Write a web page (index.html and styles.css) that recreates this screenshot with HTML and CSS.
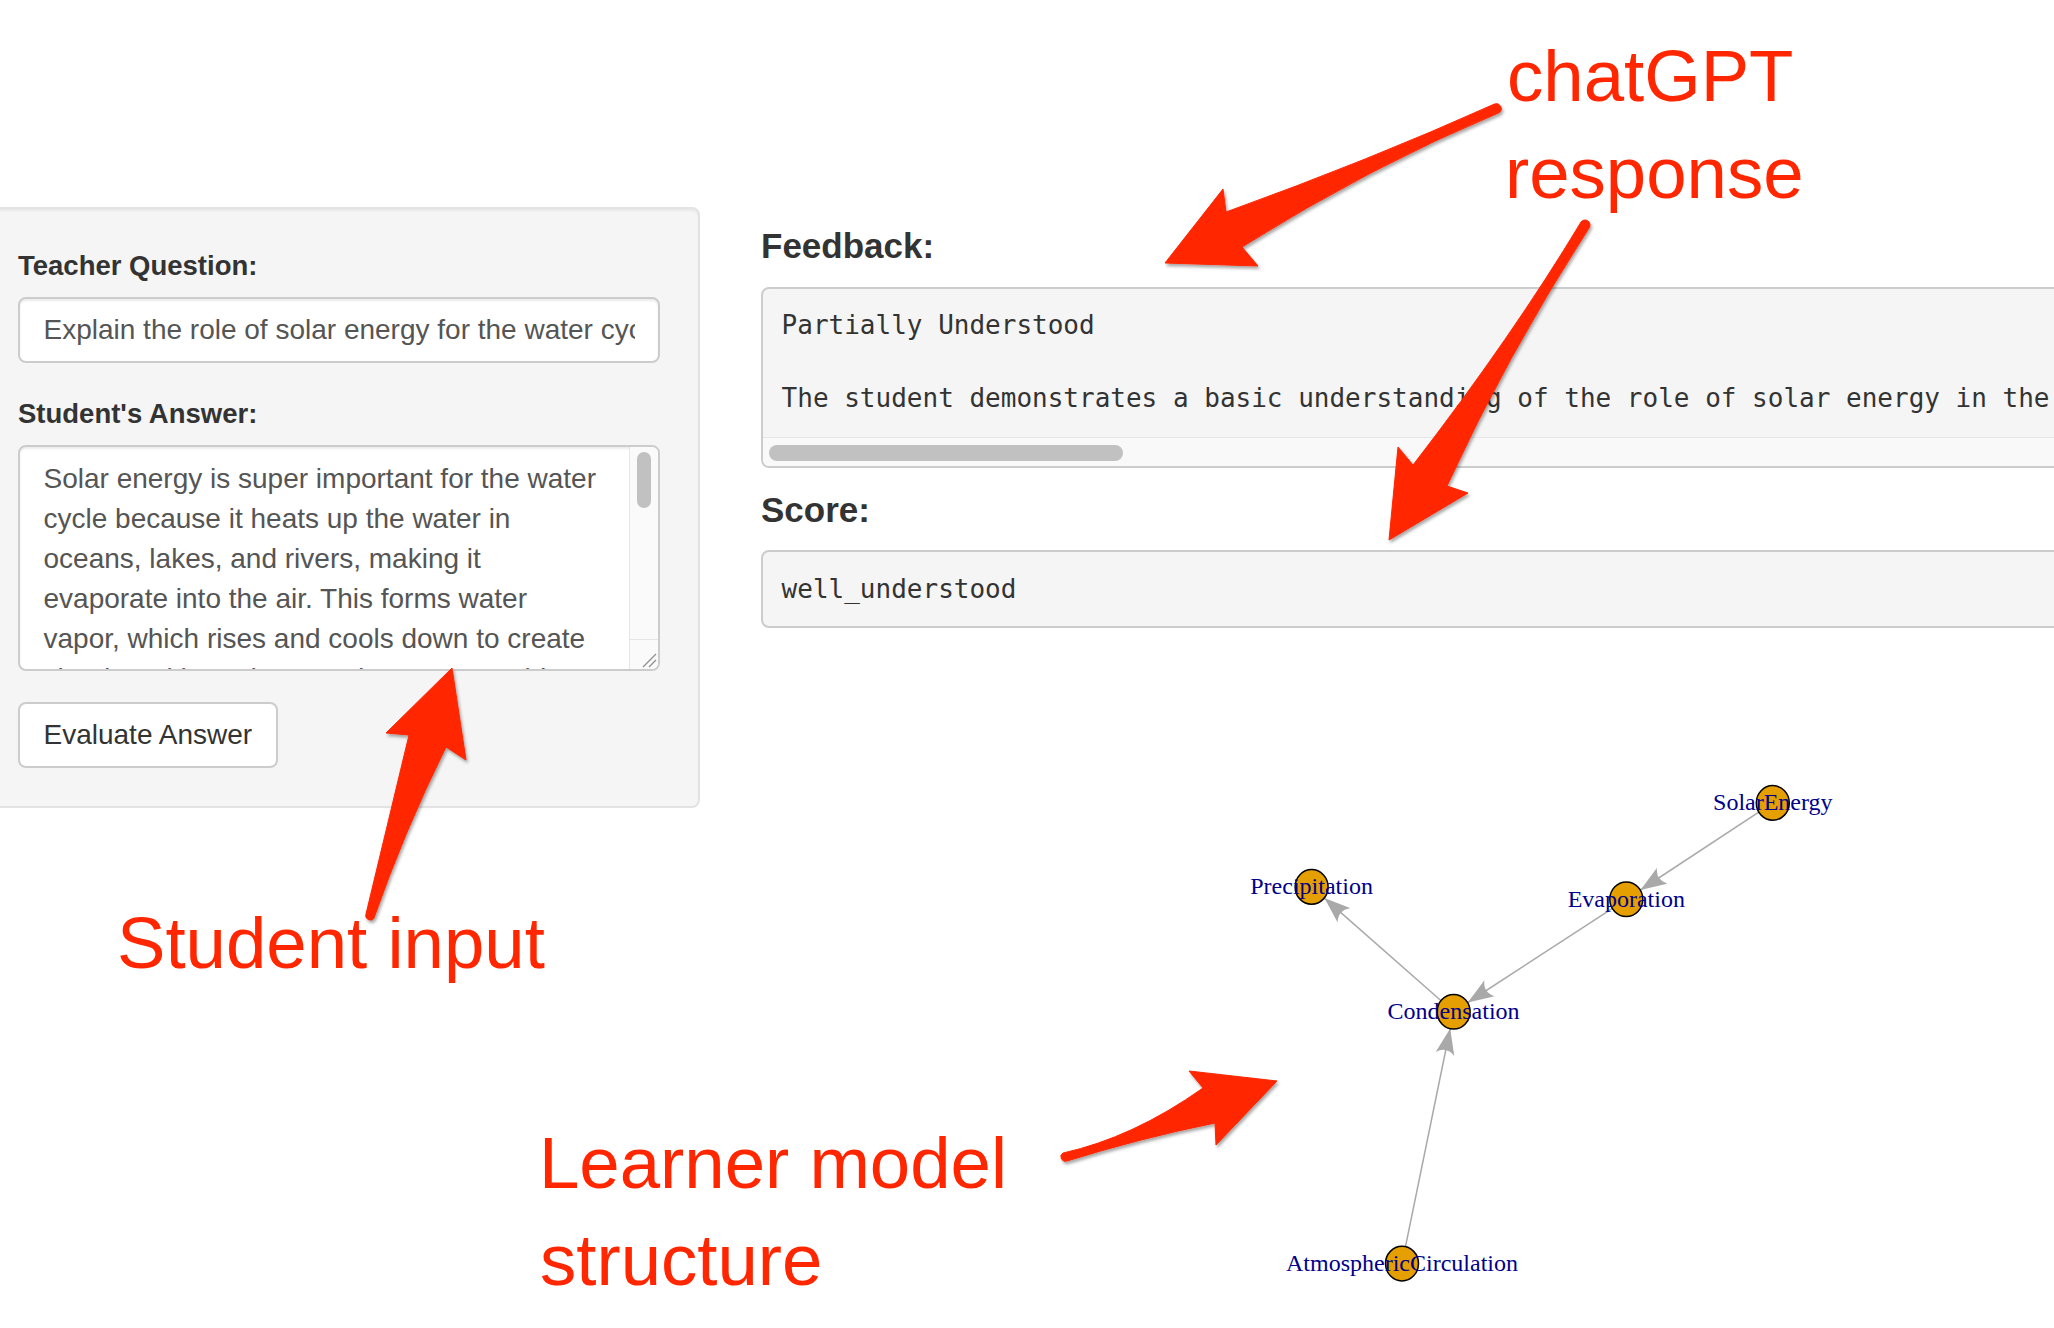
FILE: index.html
```html
<!DOCTYPE html>
<html lang="en">
<head>
<meta charset="utf-8">
<title>Answer evaluation</title>
<link rel="stylesheet" href="styles.css">
</head>
<body>
<div class="page">
  <aside class="well">
    <div class="form-group">
      <label class="control-label" for="question">Teacher Question:</label>
      <input id="question" class="form-control text-input" type="text" value="Explain the role of solar energy for the water cycle.">
    </div>
    <div class="form-group">
      <label class="control-label" for="answer">Student's Answer:</label>
      <div class="answer-wrap">
        <textarea id="answer" class="form-control answer">Solar energy is super important for the water cycle because it heats up the water in oceans, lakes, and rivers, making it evaporate into the air. This forms water vapor, which rises and cools down to create clouds. Without the sun, the water wouldn't be able to evaporate, and there would be no clouds or rain at all. When the clouds get heavy with water droplets, the water falls back down to the ground as precipitation, like rain or snow. The sun also helps to move the air around the planet, which carries the clouds and the water vapor to different places. So basically, the sun is what keeps the whole water cycle going, and without it everything would just stop and stay the same forever.</textarea>
        <div class="vscroll"><div class="vthumb"></div></div>
        <div class="vcorner">
          <svg width="16" height="16" viewBox="0 0 16 16"><path d="M2,15 L15,2 M8,15 L15,8" stroke="#8f8f8f" stroke-width="1.3" fill="none"/></svg>
        </div>
      </div>
    </div>
    <button class="btn" type="button">Evaluate Answer</button>
  </aside>

  <main class="main">
    <h4 class="out-label">Feedback:</h4>
    <div class="pre-box">
      <pre class="pre-text">Partially Understood

The student demonstrates a basic understanding of the role of solar energy in the water cycle, correctly noting that the sun heats water and causes evaporation.</pre>
      <div class="hscroll"><div class="hthumb"></div></div>
    </div>
    <h4 class="out-label score-label">Score:</h4>
    <pre class="score">well_understood</pre>

    <svg class="graph" width="1293" height="678" viewBox="0 0 1293 678">
      <defs>
        <marker id="ah" markerUnits="userSpaceOnUse" markerWidth="28" markerHeight="20" refX="26" refY="10" orient="auto" viewBox="0 0 28 20">
          <path d="M26,10 L0,0.5 Q8,10 0,19.5 Z" fill="#a9a9a9" stroke="none"/>
        </marker>
      </defs>
      <g class="edges" stroke="#a9a9a9" stroke-width="1.5" marker-end="url(#ah)">
        <line x1="1011.8" y1="152.9" x2="879.5" y2="240"/>
        <line x1="865.3" y1="249.3" x2="706.8" y2="352.5"/>
        <line x1="692.6" y1="361.8" x2="563.4" y2="248.1"/>
        <line x1="641" y1="613.6" x2="689.2" y2="378.5"/>
      </g>
      <g class="nodes" fill="#e69f00" stroke="#000" stroke-width="1.5">
        <ellipse cx="1011.8" cy="152.9" rx="16.5" ry="17.3"/>
        <ellipse cx="865.3" cy="249.3" rx="16.5" ry="17.3"/>
        <ellipse cx="550.6" cy="236.9" rx="16.5" ry="17.3"/>
        <ellipse cx="692.6" cy="361.8" rx="16.5" ry="17.3"/>
        <ellipse cx="641" cy="613.6" rx="16.5" ry="17.3"/>
      </g>
      <g class="labels" font-family="'Liberation Serif', 'Times New Roman', serif" font-size="24" fill="#00008b" text-anchor="middle">
        <text x="1011.8" y="160.2">SolarEnergy</text>
        <text x="865.3" y="256.6">Evaporation</text>
        <text x="550.6" y="244.2">Precipitation</text>
        <text x="692.6" y="369.1">Condensation</text>
        <text x="641" y="620.9">AtmosphericCirculation</text>
      </g>
    </svg>
  </main>
</div>

<svg class="annotations" width="2054" height="1328" viewBox="0 0 2054 1328">
  <defs>
    <filter id="sh" x="-20%" y="-20%" width="140%" height="140%">
      <feDropShadow dx="1.5" dy="2.5" stdDeviation="1.5" flood-color="#000" flood-opacity="0.35"/>
    </filter>
  </defs>
  <g fill="#ff2600" stroke="#ff2600" stroke-width="1" stroke-linejoin="round" filter="url(#sh)">
    <path d="M1494.5,104 Q1370,160 1226,212 L1223,189 L1165,263 L1258,266 L1242,247 Q1370.75,166.25 1499.5,112.5 A5 5 0 0 0 1494.5,104 Z"/>
    <path d="M1581,222 Q1512.5,336 1413,465 L1398,447 L1389,540 L1468,493 L1447,486 Q1506,357 1589,228 A5 5 0 0 0 1581,222 Z"/>
    <path d="M366,914 L409,735 L386,733 L452,668 L466,760 L446,747 Q404,832 374,918 A4.5 4.5 0 0 1 366,914 Z"/>
    <path d="M1063,1153 Q1133,1137.5 1203,1088 L1189,1071 L1277,1081 L1216,1145 L1215,1123 Q1141,1138 1067,1161 A4.5 4.5 0 0 1 1063,1153 Z"/>
  </g>
  <g class="annot-text" font-family="'Liberation Sans', Arial, sans-serif" font-size="72.6" fill="#ff2600">
    <text x="1507" y="101">chatGPT</text>
    <text x="1505" y="198">response</text>
    <text x="117" y="968">Student input</text>
    <text x="539" y="1188">Learner model</text>
    <text x="540" y="1285">structure</text>
  </g>
</svg>
</body>
</html>
```

FILE: styles.css
```css
* {
  box-sizing: border-box;
}

html,
body {
  margin: 0;
  padding: 0;
  background: #fff;
}

body {
  position: relative;
  width: 2054px;
  height: 1328px;
  overflow: hidden;
  font-family: "Liberation Sans", Arial, sans-serif;
  color: #333;
}

.page {
  display: flex;
  align-items: flex-start;
  padding-top: 207px;
}

/* ---------- sidebar well ---------- */
.well {
  flex: 0 0 721px;
  margin-left: -21px;
  padding: 37px 38px 38px 37px;
  background: #f5f5f5;
  border: 2px solid #e3e3e3;
  border-radius: 8px;
  box-shadow: inset 0 2px 2px rgba(0, 0, 0, 0.05);
}

.form-group {
  margin-bottom: 31px;
}

.control-label {
  display: block;
  font-weight: bold;
  font-size: 27.5px;
  line-height: 40px;
  margin-bottom: 11px;
  color: #333;
}

.form-control {
  display: block;
  width: 100%;
  margin: 0;
  font-family: "Liberation Sans", Arial, sans-serif;
  font-size: 28px;
  color: #555;
  background: #fff;
  border: 2px solid #ccc;
  border-radius: 8px;
  box-shadow: inset 0 2px 2px rgba(0, 0, 0, 0.075);
  outline: none;
}

.text-input {
  height: 66px;
  line-height: 40px;
  padding: 0 23.5px;
}

.answer-wrap {
  position: relative;
}

.answer {
  height: 226px;
  line-height: 40px;
  padding: 11.8px 52.5px 11.8px 23.5px;
  overflow: hidden;
  resize: none;
}

/* scrollbar drawn over the textarea's right edge */
.vscroll {
  position: absolute;
  top: 2px;
  right: 2px;
  bottom: 31px;
  width: 29px;
  padding: 5px 0 0 7px;
  background: #fafafa;
  border-left: 1px solid #e6e6e6;
  border-bottom: 1px solid #e6e6e6;
  border-top-right-radius: 6px;
}

.vthumb {
  width: 14px;
  height: 56px;
  border-radius: 7px;
  background: #c1c1c1;
}

.vcorner {
  position: absolute;
  right: 2px;
  bottom: 2px;
  width: 29px;
  height: 29px;
  display: flex;
  align-items: flex-end;
  justify-content: flex-end;
  padding: 0 1px 1px 0;
  background: #fafafa;
  border-left: 1px solid #e6e6e6;
  border-bottom-right-radius: 6px;
}

.vcorner svg {
  display: block;
}

.btn {
  display: block;
  height: 66px;
  margin-top: 1px;
  padding: 0 23.5px;
  font-family: "Liberation Sans", Arial, sans-serif;
  font-size: 28px;
  line-height: 62px;
  color: #333;
  background: #fff;
  border: 2px solid #ccc;
  border-radius: 8px;
}

/* ---------- main column ---------- */
.main {
  flex: 0 0 1400px;
  margin-left: 61px;
}

.out-label {
  margin: 20px 0 21px;
  font-size: 35px;
  line-height: 38.8px;
  font-weight: bold;
  color: #333;
}

.score-label {
  margin: 23px 0 20.6px;
}

.pre-box {
  background: #f5f5f5;
  border: 2px solid #ccc;
  border-radius: 8px;
  overflow: hidden;
}

.pre-text,
.score {
  margin: 0;
  font-family: "DejaVu Sans Mono", "Liberation Mono", monospace;
  font-size: 26px;
  line-height: 36.4px;
  color: #333;
  white-space: pre;
  overflow: hidden;
}

.pre-text {
  padding: 18.6px 18.6px 20px;
}

.hscroll {
  height: 29px;
  padding: 7px 0 0 6px;
  background: #f9f9f9;
  border-top: 1px solid #e6e6e6;
}

.hthumb {
  width: 354px;
  height: 16px;
  border-radius: 8px;
  background: #c1c1c1;
}

.score {
  padding: 18.6px;
  background: #f5f5f5;
  border: 2px solid #ccc;
  border-radius: 8px;
}

.graph {
  display: block;
  margin-top: 22.4px;
}

/* ---------- annotation overlay ---------- */
.annotations {
  position: absolute;
  top: 0;
  left: 0;
  pointer-events: none;
}
```
